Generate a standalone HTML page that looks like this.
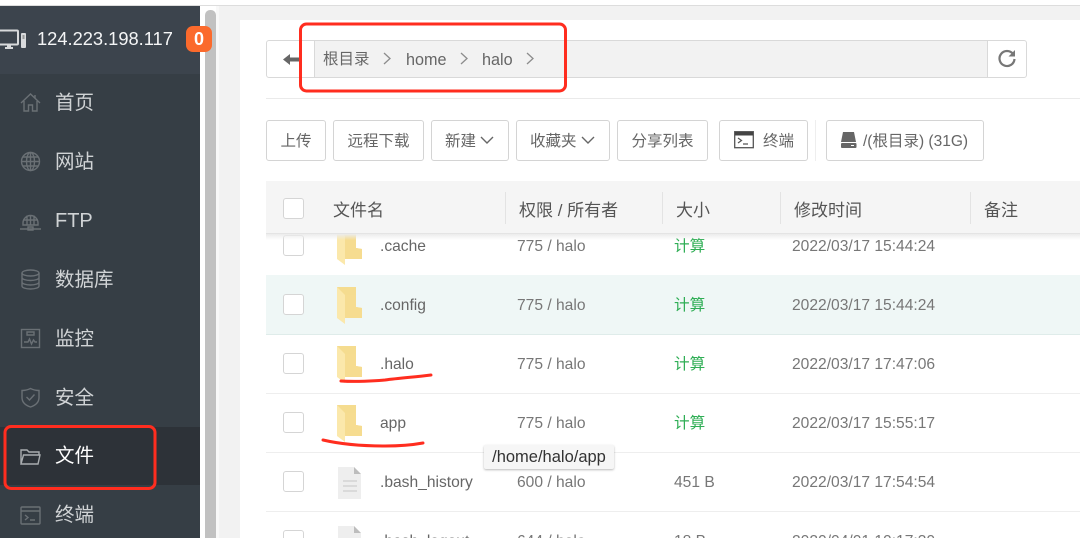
<!DOCTYPE html>
<html><head><meta charset="utf-8">
<style>
html,body{margin:0;padding:0;width:1080px;height:538px;overflow:hidden;background:#fff}
#w{position:absolute;left:0;top:0;width:1080px;height:538px;overflow:hidden;filter:blur(.35px);font-family:"Liberation Sans","Noto Sans CJK SC",sans-serif;color:#666}
.a{position:absolute;white-space:nowrap}
.nav{position:absolute;left:55px;font-size:19.5px;line-height:30px;color:#d0d3d5;white-space:nowrap}
.ic{position:absolute;left:20px;width:21px;height:21px;fill:none;stroke:#6a7075;stroke-width:1.4}
.btn{position:absolute;top:120px;height:41px;box-sizing:border-box;border:1px solid #d4d4d4;border-radius:3px;background:#fff;font-size:15.5px;line-height:41px;text-align:center;color:#666;white-space:nowrap}
.th{position:absolute;top:199px;font-size:17px;line-height:24px;color:#555;white-space:nowrap}
.sep{position:absolute;top:192px;width:1px;height:32px;background:#e3e3e3}
.row{position:absolute;left:0;width:814px;height:59px;box-sizing:border-box;border-bottom:1px solid #eee;background:#fff}
.cb{position:absolute;left:17px;top:18px;width:21px;height:21px;box-sizing:border-box;border:1.5px solid #d5d5d5;border-radius:3px;background:#fff}
.t{position:absolute;top:19px;font-size:15.6px;line-height:22px;color:#777;white-space:nowrap}
.n{left:114px;color:#666}.p{left:251px}.s{left:408px;color:#777}.g{color:#2fae55}.d{left:526px}
.fi{position:absolute;left:71px;top:11px;width:25px;height:38px}
.fl{top:14px;height:32px}
</style></head><body><div id="w">

<div class="a" style="left:0;top:5px;width:1080px;height:1px;background:#ddd"></div>

<!-- right background -->
<div class="a" style="left:216px;top:6px;width:864px;height:532px;background:#f2f2f2"></div>
<div class="a" style="left:216px;top:6px;width:3px;height:532px;background:#f8f8f8"></div>
<div class="a" style="left:240px;top:20px;width:840px;height:518px;background:#fff"></div>

<!-- sidebar -->
<div class="a" style="left:0;top:6px;width:200px;height:532px;background:#363e45"></div>
<div class="a" style="left:0;top:6px;width:200px;height:68px;background:#3c444d"></div>
<div class="a" style="left:0;top:427px;width:200px;height:58px;background:#2d3238"></div>
<div class="a" style="left:200px;top:6px;width:5px;height:532px;background:#fff"></div>
<div class="a" style="left:205px;top:10px;width:11px;height:528px;background:#c1c1c1;border-radius:5px 5px 0 0"></div>

<svg class="a" style="left:0;top:28px" width="28" height="24" viewBox="0 0 28 24" fill="none">
<rect x="-3" y="2.500" width="21" height="14" rx="1" stroke="#d8dadc" stroke-width="2"/>
<path d="M5 20h8M8 17v3M10 17v3" stroke="#d8dadc" stroke-width="2"/>
<rect x="21" y="5" width="5" height="15" rx="1" fill="#d8dadc"/><path d="M22.500 8h2M22.500 10h2" stroke="#555"/>
</svg>
<div class="a" style="left:37px;top:26px;font-size:18.3px;line-height:26px;color:#f4f5f6">124.223.198.117</div>
<div class="a" style="left:186px;top:26px;width:26px;height:26px;border-radius:7px;background:#fb6a2c;color:#fff;font-weight:bold;font-size:18px;line-height:26px;text-align:center">0</div>

<svg class="ic" style="top:92px" viewBox="0 0 21 21"><path d="M1 11L10.500 2 20 11M4 9v10h4.500v-6h4v6H17V9M15 3v3"/></svg>
<div class="nav" style="top:88px">首页</div>
<svg class="ic" style="top:151px" viewBox="0 0 21 21"><circle cx="10.500" cy="10.500" r="9"/><ellipse cx="10.500" cy="10.500" rx="4" ry="9"/><path d="M10.500 1.500v18M1.500 10.500h18M3 6h15M3 15h15"/></svg>
<div class="nav" style="top:147px">网站</div>
<svg class="ic" style="top:210px" viewBox="0 0 21 21"><path d="M3 13a7.500 7.500 0 1 1 15 0v2H3zM10.500 5v10M7 5.500v9.500M14 5.500v9.500M3 10h15M0 19h21M8 17h5v3H8z"/></svg>
<div class="nav" style="top:206px;font-size:20px">FTP</div>
<svg class="ic" style="top:269px" viewBox="0 0 21 21"><ellipse cx="10.500" cy="4" rx="8.500" ry="3"/><path d="M2 4v13c0 1.700 3.800 3 8.500 3s8.500-1.300 8.500-3V4M2 8.500c0 1.700 3.800 3 8.500 3s8.500-1.300 8.500-3M2 13c0 1.700 3.800 3 8.500 3s8.500-1.300 8.500-3"/></svg>
<div class="nav" style="top:265px">数据库</div>
<svg class="ic" style="top:328px" viewBox="0 0 21 21"><rect x="1.500" y="1.500" width="18" height="18"/><path d="M4 14h4l1.500-3 2 5 2-4 1.500 2h2M7 4h7v3H7z"/></svg>
<div class="nav" style="top:324px">监控</div>
<svg class="ic" style="top:387px" viewBox="0 0 21 21"><path d="M10.500 1.500c3 1.500 5.500 2 8.500 2v7c0 5-4 8-8.500 9.500C6 18.500 2 15.500 2 10.500v-7c3 0 5.500-.5 8.500-2zM6.500 10l3 3 5-5.500"/></svg>
<div class="nav" style="top:383px">安全</div>
<svg class="ic" style="top:446px;stroke:#a9adb0" viewBox="0 0 21 21"><path d="M1 18V4h6l2 2h10v3M1 18l2.500-9H20l-2 9z"/></svg>
<div class="nav" style="top:441px;color:#fff">文件</div>
<svg class="ic" style="top:505px" viewBox="0 0 21 21"><rect x="1" y="2" width="19" height="17" rx="1"/><path d="M1 6h19M5 10l3 2.500L5 15M10 15h5"/></svg>
<div class="nav" style="top:500px">终端</div>

<!-- path bar -->
<div class="a" style="left:266px;top:40px;width:761px;height:38px;box-sizing:border-box;border:1px solid #d9d9d9;border-radius:3px;background:#fff"></div>
<div class="a" style="left:314px;top:40px;width:674px;height:38px;box-sizing:border-box;background:#f2f2f2;border:1px solid #d9d9d9"></div>
<svg class="a" style="left:283px;top:52px" width="17" height="15" viewBox="0 0 17 15"><path d="M0 7.500L7 2v3.500h10v4H7V13z" fill="#666"/></svg>
<div class="a" style="left:323px;top:49px;font-size:15.500px;line-height:22px;color:#666">根目录</div>
<div class="a" style="left:406px;top:49px;font-size:16.200px;line-height:22px;color:#666">home</div>
<div class="a" style="left:482px;top:49px;font-size:16.200px;line-height:22px;color:#666">halo</div>
<svg class="a" style="left:380px;top:50px" width="160" height="18" viewBox="0 0 160 18" fill="none" stroke="#8c8c8c" stroke-width="1.300"><path d="M4 3l6 5.500-6 5.500M81 3l6 5.500-6 5.500M147 3l6 5.500-6 5.500"/></svg>
<svg class="a" style="left:997px;top:48px" width="20" height="20" viewBox="0 0 20 20" fill="none"><path d="M16 6A7.500 7.500 0 1 0 17.500 11" stroke="#777" stroke-width="2.200"/><path d="M18 2v6.500h-6.500z" fill="#777"/></svg>
<div class="a" style="left:266px;top:98px;width:814px;height:1px;background:#eaeaea"></div>

<!-- buttons -->
<div class="btn" style="left:266px;width:60px">上传</div>
<div class="btn" style="left:333px;width:91px">远程下载</div>
<div class="btn" style="left:431px;width:78px;text-align:left;padding-left:13px">新建</div>
<div class="btn" style="left:516px;width:94px;text-align:left;padding-left:13px">收藏夹</div>
<svg class="a" style="left:480px;top:135px" width="116" height="11" viewBox="0 0 116 11" fill="none" stroke="#666" stroke-width="1.400"><path d="M1 2l6 6 6-6M102 2l6 6 6-6"/></svg>
<div class="btn" style="left:617px;width:91px">分享列表</div>
<div class="btn" style="left:719px;width:89px;text-align:left;padding-left:43px">终端</div>
<svg class="a" style="left:734px;top:131px" width="20" height="18" viewBox="0 0 20 18" fill="none"><rect x=".7" y=".7" width="18.600" height="16" stroke="#555" stroke-width="1.300"/><rect x="1" y="1" width="18" height="3.500" fill="#444"/><path d="M4 7l3.500 2.500L4 12M9 13h5" stroke="#555" stroke-width="1.200"/></svg>
<div class="a" style="left:815px;top:120px;width:1px;height:41px;background:#eee"></div>
<div class="btn" style="left:826px;width:158px;text-align:left;padding-left:36px">/(根目录) (31G)</div>
<svg class="a" style="left:840px;top:131px" width="17" height="18" viewBox="0 0 17 18"><path d="M3 1h11l2 10H1z" fill="#666"/><rect x="1" y="12" width="15.500" height="5" rx="1" fill="#666"/><path d="M11 14.500h3" stroke="#fff"/></svg>

<!-- table head -->
<div class="a" style="left:266px;top:181px;width:814px;height:52px;background:#f5f5f5;border-bottom:1px solid #e4e4e4"></div>
<div class="a" style="left:283px;top:198px;width:21px;height:21px;box-sizing:border-box;border:1.500px solid #d5d5d5;border-radius:3px;background:#fff"></div>
<div class="th" style="left:333px">文件名</div>
<div class="sep" style="left:505px"></div><div class="th" style="left:519px">权限 / 所有者</div>
<div class="sep" style="left:662px"></div><div class="th" style="left:676px">大小</div>
<div class="sep" style="left:780px"></div><div class="th" style="left:794px">修改时间</div>
<div class="sep" style="left:970px"></div><div class="th" style="left:984px">备注</div>

<!-- rows -->
<div class="a" style="left:266px;top:234px;width:814px;height:304px;overflow:hidden">

<div class="row" style="top:-17px">
 <div class="cb"></div>
 <svg class="fi" viewBox="0 0 25 38"><path d="M0 0h19v20l6 1v10H8z" fill="#f5dc8f"/><path d="M8 8h11v12l6 1v10H8z" fill="#f6dc90"/><path d="M0 0l8 8v29l-8-6z" fill="#fbe8ab"/></svg>
 <div class="t n">.cache</div><div class="t p">775 / halo</div><div class="t s g">计算</div><div class="t d">2022/03/17 15:44:24</div>
</div>
<div class="row" style="top:42px;background:#eff7f6;border-bottom-color:#dfecea;box-shadow:0 -1px 0 #eff7f6">
 <div class="cb"></div>
 <svg class="fi" viewBox="0 0 25 38"><path d="M0 0h19v20l6 1v10H8z" fill="#f5dc8f"/><path d="M8 8h11v12l6 1v10H8z" fill="#f6dc90"/><path d="M0 0l8 8v29l-8-6z" fill="#fbe8ab"/></svg>
 <div class="t n">.config</div><div class="t p">775 / halo</div><div class="t s g">计算</div><div class="t d">2022/03/17 15:44:24</div>
</div>
<div class="row" style="top:101px">
 <div class="cb"></div>
 <svg class="fi" viewBox="0 0 25 38"><path d="M0 0h19v20l6 1v10H8z" fill="#f5dc8f"/><path d="M8 8h11v12l6 1v10H8z" fill="#f6dc90"/><path d="M0 0l8 8v29l-8-6z" fill="#fbe8ab"/></svg>
 <div class="t n">.halo</div><div class="t p">775 / halo</div><div class="t s g">计算</div><div class="t d">2022/03/17 17:47:06</div>
</div>
<div class="row" style="top:160px">
 <div class="cb"></div>
 <svg class="fi" viewBox="0 0 25 38"><path d="M0 0h19v20l6 1v10H8z" fill="#f5dc8f"/><path d="M8 8h11v12l6 1v10H8z" fill="#f6dc90"/><path d="M0 0l8 8v29l-8-6z" fill="#fbe8ab"/></svg>
 <div class="t n">app</div><div class="t p">775 / halo</div><div class="t s g">计算</div><div class="t d">2022/03/17 15:55:17</div>
</div>
<div class="row" style="top:219px">
 <div class="cb"></div>
 <svg class="fi fl" viewBox="0 0 25 32"><path d="M1 0h16l7 7v25H1z" fill="#eeeeee"/><path d="M17 0l7 7h-7z" fill="#bdbdbd"/><path d="M6 14h14M6 19h14M6 24h14" stroke="#cdcdcd" stroke-width="1.300"/></svg>
 <div class="t n">.bash_history</div><div class="t p">600 / halo</div><div class="t s">451 B</div><div class="t d">2022/03/17 17:54:54</div>
</div>
<div class="row" style="top:278px">
 <div class="cb"></div>
 <svg class="fi fl" viewBox="0 0 25 32"><path d="M1 0h16l7 7v25H1z" fill="#eeeeee"/><path d="M17 0l7 7h-7z" fill="#bdbdbd"/><path d="M6 14h14M6 19h14M6 24h14" stroke="#cdcdcd" stroke-width="1.300"/></svg>
 <div class="t n">.bash_logout</div><div class="t p">644 / halo</div><div class="t s">18 B</div><div class="t d">2020/04/01 10:17:30</div>
</div>
</div>
<div class="a" style="left:266px;top:234px;width:814px;height:6px;background:linear-gradient(#ececec,rgba(255,255,255,0))"></div>

<!-- tooltip -->
<div class="a" style="left:484px;top:445px;width:130px;height:24px;background:#f6f6f6;border-radius:2px;box-shadow:0 1px 2px rgba(0,0,0,.28);font-size:16.500px;line-height:24px;text-align:center;color:#333">/home/halo/app</div>

<!-- annotations -->
<svg class="a" style="left:0;top:0" width="1080" height="538" viewBox="0 0 1080 538" fill="none" stroke="#ff2d1f" stroke-width="3" stroke-linecap="round">
<rect x="300.500" y="24" width="265" height="67" rx="6"/>
<rect x="5" y="426.500" width="150" height="62" rx="6"/>
<path d="M341 381C355 382 375 381 385 380 400 378 415 377 431 375"/>
<path d="M323 440C340 444 360 446 385 446 400 446 412 445 423 443"/>
</svg>
</div></body></html>
